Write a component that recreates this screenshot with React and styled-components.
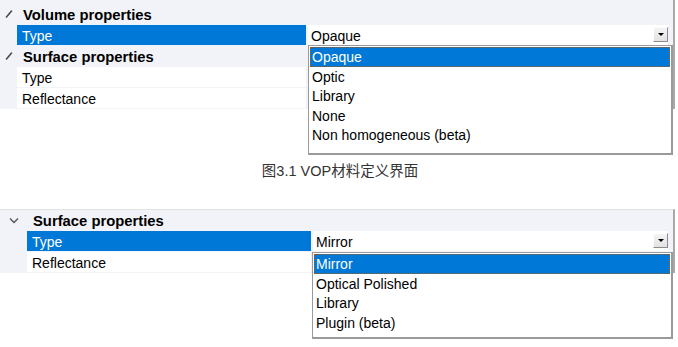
import React from "react";
import styled, { createGlobalStyle } from "styled-components";

const GlobalStyle = createGlobalStyle`
  body {
    margin: 0;
    background: #fff;
    font-family: "Liberation Sans", Arial, sans-serif;
  }
`;

const BLUE = "#0078d7";
const GRID_BG = "#f1f3f8";

export default function App() {
  return (
    <>
      <GlobalStyle />
      <Page>
        <Grid $top={4}>
          <HeaderRow $indent={17}>
            <Marker>
              <svg width="8" height="8" viewBox="0 0 8 8">
                <path d="M6.5 1 L1.5 7" stroke="#4a4a4a" strokeWidth="1.6" strokeLinecap="round" />
              </svg>
            </Marker>
            <HeaderText>Volume properties</HeaderText>
          </HeaderRow>
          <PropRow $indent={17} $name={291}>
            <span />
            <NameCell $selected>Type</NameCell>
            <ValueCell>
              Opaque
              <DropButton><Arrow /></DropButton>
            </ValueCell>
          </PropRow>
          <HeaderRow $indent={17}>
            <Marker>
              <svg width="8" height="8" viewBox="0 0 8 8">
                <path d="M6.5 1 L1.5 7" stroke="#4a4a4a" strokeWidth="1.6" strokeLinecap="round" />
              </svg>
            </Marker>
            <HeaderText>Surface properties</HeaderText>
          </HeaderRow>
          <PropRow $indent={17} $name={291}>
            <span />
            <NameCell>Type</NameCell>
            <ValueCell />
          </PropRow>
          <PropRow $indent={17} $name={291}>
            <span />
            <NameCell>Reflectance</NameCell>
            <ValueCell />
          </PropRow>

          <DropList $left={308} $top={45} $width={365} $height={110}>
            <Item $selected>Opaque</Item>
            <Item>Optic</Item>
            <Item>Library</Item>
            <Item>None</Item>
            <Item>Non homogeneous (beta)</Item>
          </DropList>
        </Grid>

        <Caption>图3.1 VOP材料定义界面</Caption>

        <Grid $top={0} $bordered>
          <HeaderRow $indent={27}>
            <Marker>
              <svg width="10" height="7" viewBox="0 0 10 7">
                <path d="M1 1.5 L5 5.5 L9 1.5" fill="none" stroke="#555" strokeWidth="1.4" />
              </svg>
            </Marker>
            <HeaderText>Surface properties</HeaderText>
          </HeaderRow>
          <PropRow $indent={27} $name={286}>
            <span />
            <NameCell $selected>Type</NameCell>
            <ValueCell>
              Mirror
              <DropButton><Arrow /></DropButton>
            </ValueCell>
          </PropRow>
          <PropRow $indent={27} $name={286}>
            <span />
            <NameCell>Reflectance</NameCell>
            <ValueCell />
          </PropRow>

          <DropList $left={312} $top={42} $width={361} $height={87}>
            <Item $selected>Mirror</Item>
            <Item>Optical Polished</Item>
            <Item>Library</Item>
            <Item>Plugin (beta)</Item>
          </DropList>
        </Grid>
      </Page>
    </>
  );
}

const Page = styled.div`
  width: 678px;
  min-height: 347px;
  display: flex;
  flex-direction: column;
`;

const Grid = styled.div`
  position: relative;
  width: 675px;
  box-sizing: border-box;
  padding: ${(p) => p.$top}px 5px 0 0;
  background: ${GRID_BG};
  border-right: 2px solid #a9a9a9;
  border-top: ${(p) => (p.$bordered ? "1px solid #e2e2e2" : "none")};
  font-size: 14px;
  color: #000;
`;

const HeaderRow = styled.div`
  display: grid;
  grid-template-columns: ${(p) => p.$indent}px 1fr;
  height: 20px;
  margin-bottom: 1px;
  align-items: center;
`;

const Marker = styled.span`
  display: flex;
  justify-content: center;
  align-items: center;
  padding-left: 1px;
`;

const HeaderText = styled.span`
  font-weight: bold;
  font-size: 14.8px;
  padding-left: 6px;
  padding-top: 2px;
`;

const PropRow = styled.div`
  display: grid;
  grid-template-columns: ${(p) => p.$indent}px ${(p) => p.$name}px 1fr;
  height: 20px;
  margin-bottom: 1px;
`;

const NameCell = styled.div`
  display: flex;
  align-items: center;
  padding-left: 5px;
  padding-top: 1px;
  margin-right: 2px;
  background: ${(p) => (p.$selected ? BLUE : "#fff")};
  color: ${(p) => (p.$selected ? "#fff" : "#000")};
`;

const ValueCell = styled.div`
  display: flex;
  align-items: center;
  padding-left: 3px;
  padding-top: 1px;
  background: #fff;
  position: relative;
`;

const DropButton = styled.span`
  position: absolute;
  right: 0;
  top: 2px;
  width: 15px;
  height: 15px;
  box-sizing: border-box;
  background: linear-gradient(#f4f4f4, #e2e2e2);
  border: 1px solid;
  border-color: #fdfdfd #8d8d8d #8d8d8d #fdfdfd;
  display: flex;
  align-items: center;
  justify-content: center;
`;

const Arrow = styled.span`
  width: 0;
  height: 0;
  border-left: 3px solid transparent;
  border-right: 3px solid transparent;
  border-top: 3px solid #000;
`;

const DropList = styled.div`
  position: absolute;
  left: ${(p) => p.$left}px;
  top: ${(p) => p.$top}px;
  width: ${(p) => p.$width}px;
  height: ${(p) => p.$height}px;
  box-sizing: border-box;
  background: #fff;
  border: 1px solid #9a9a9a;
  border-right-width: 2px;
  border-bottom-width: 2px;
  padding: 1px 1px 0 1px;
  z-index: 2;
`;

const Item = styled.div`
  height: 19.5px;
  line-height: 21px;
  box-sizing: border-box;
  padding-left: 2px;
  font-size: 14px;
  background: ${(p) => (p.$selected ? BLUE : "transparent")};
  color: ${(p) => (p.$selected ? "#fff" : "#000")};
  outline: ${(p) => (p.$selected ? "1px dotted #a85a10" : "none")};
  outline-offset: -1px;
`;

const Caption = styled.div`
  padding: 54px 0 29px;
  line-height: 17px;
  text-align: center;
  font-family: "Liberation Sans", "Noto Sans CJK SC", sans-serif;
  font-size: 14.5px;
  color: #333;
  margin-left: 2px;
`;
